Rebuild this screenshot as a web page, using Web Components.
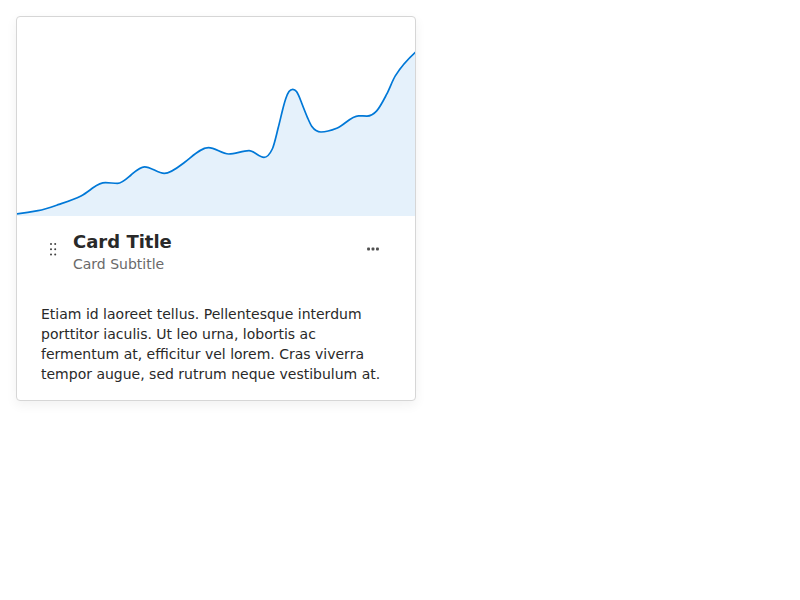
<!DOCTYPE html>
<html lang="en">
<head>
<meta charset="utf-8">
<title>Card</title>
<style>
  body { margin: 0; padding: 16px; background: #fff; color: #292929; font: 14px/20px "DejaVu Sans", sans-serif; }
</style>
</head>
<body>
<media-card>
  <area-chart slot="media" label="Growth trend"></area-chart>
  <card-header slot="header">
    <drag-handle slot="start"></drag-handle>
    <span slot="title">Card Title</span>
    <span slot="subtitle">Card Subtitle</span>
    <menu-button slot="end" label="More options"></menu-button>
  </card-header>
  Etiam id laoreet tellus. Pellentesque interdum porttitor iaculis. Ut leo urna, lobortis ac fermentum at, efficitur vel lorem. Cras viverra tempor augue, sed rutrum neque vestibulum at.
</media-card>

<template id="media-card">
  <style>
    :host { display: block; box-sizing: border-box; width: 100%; max-width: 400px; border: 1px solid #d6d6d6; border-radius: 4px; background: #fff; box-shadow: 0 4px 12px rgba(0, 0, 0, .06); }
    .media { overflow: hidden; border-radius: 3px 3px 0 0; }
    .body { padding: 30px 24px 16px; }
  </style>
  <div class="media"><slot name="media"></slot></div>
  <slot name="header"></slot>
  <div class="body"><slot></slot></div>
</template>

<template id="card-header">
  <style>
    :host { display: flex; align-items: center; gap: 8px; padding: 14px 24px 0; }
    .text { flex: 1; min-width: 0; }
    h2 { margin: 0; font-size: 18px; line-height: 24px; font-weight: 700; }
    p { margin: 0; color: #6a6a6a; }
    .tool { padding-bottom: 6px; }
  </style>
  <div class="tool"><slot name="start"></slot></div>
  <div class="text">
    <h2><slot name="title"></slot></h2>
    <p><slot name="subtitle"></slot></p>
  </div>
  <div class="tool"><slot name="end"></slot></div>
</template>

<template id="drag-handle">
  <style>
    :host { display: flex; color: #404040; cursor: grab; }
    svg { display: block; }
  </style>
  <svg width="24" height="24" viewBox="0 0 24 24" fill="currentColor" aria-hidden="true">
    <circle cx="10" cy="7" r="1"/><circle cx="14.2" cy="7" r="1"/>
    <circle cx="10" cy="12.2" r="1"/><circle cx="14.2" cy="12.2" r="1"/>
    <circle cx="10" cy="17.4" r="1"/><circle cx="14.2" cy="17.4" r="1"/>
  </svg>
</template>

<template id="menu-button">
  <style>
    :host { display: flex; }
    button { display: grid; place-items: center; width: 36px; height: 32px; padding: 0; border: 0; border-radius: 4px; background: none; color: #505050; cursor: pointer; }
    button:hover { background: #f2f2f2; }
  </style>
  <button type="button">
    <svg width="16" height="16" viewBox="0 0 16 16" fill="currentColor" aria-hidden="true">
      <rect x="2.1" y="6.6" width="2.9" height="2.8" rx=".9"/><rect x="6.55" y="6.6" width="2.9" height="2.8" rx=".9"/><rect x="11" y="6.6" width="2.9" height="2.8" rx=".9"/>
    </svg>
  </button>
</template>

<template id="area-chart">
  <style>
    :host { display: block; }
    svg { display: block; width: 100%; height: auto; }
    .area { fill: #e5f1fb; }
    .line { fill: none; stroke: #0078d7; stroke-width: 1.7; }
  </style>
  <svg viewBox="0 0 398 199" role="img"><path class="area"/><path class="line"/></svg>
</template>

<script>
  class TemplateElement extends HTMLElement {
    constructor() {
      super();
      this.attachShadow({ mode: "open" }).append(document.getElementById(this.localName).content.cloneNode(true));
    }
  }

  // Curve knots: x, y and the slope of the line there.
  const KNOTS = [
    [0, 196.8, -.1], [21, 193.7, -.2], [42, 187.4, -.34], [64, 178.9, -.5], [76, 170.8, -.72], [88.5, 165.6, 0], [100.5, 166.4, 0], [114, 158, -.85],
    [127.5, 149.8, 0], [147.3, 156.4, 0], [168, 145, -.75], [191.5, 130.7, 0], [211.7, 137, 0],
    [232, 133.7, 0], [247, 140.4, 0], [255.3, 132, -2.1], [261.2, 110.8, -3.9], [265.5, 93.3, -4], [268.9, 81.3, -2.9], [272, 74.5, -1.4], [275.8, 72.3, 0],
    [279.5, 74.6, 1.4], [283.9, 84, 2.6], [290.5, 100.6, 2.3], [294.9, 109.6, 1.4], [304, 115, 0], [319.7, 111.3, -.4], [341.5, 98.8, 0],
    [350, 99.1, 0], [359.7, 93.9, -1.1], [369.7, 77.2, -1.9], [378.3, 58.9, -1.6], [399, 34.8, -.9]
  ];

  class AreaChart extends TemplateElement {
    connectedCallback() {
      let d = `M${KNOTS[0][0]} ${KNOTS[0][1]}`;
      for (let i = 1; i < KNOTS.length; i++) {
        const [x0, y0, m0] = KNOTS[i - 1], [x1, y1, m1] = KNOTS[i], t = (x1 - x0) / 3;
        d += `C${x0 + t} ${y0 + m0 * t} ${x1 - t} ${y1 - m1 * t} ${x1} ${y1}`;
      }
      this.shadowRoot.querySelector("svg").setAttribute("aria-label", this.getAttribute("label") || "");
      this.shadowRoot.querySelector(".line").setAttribute("d", d);
      this.shadowRoot.querySelector(".area").setAttribute("d", d + "V199H0Z");
    }
  }

  class MenuButton extends TemplateElement {
    connectedCallback() {
      this.shadowRoot.querySelector("button").setAttribute("aria-label", this.getAttribute("label") || "");
    }
  }

  customElements.define("media-card", class extends TemplateElement {});
  customElements.define("card-header", class extends TemplateElement {});
  customElements.define("drag-handle", class extends TemplateElement {});
  customElements.define("menu-button", MenuButton);
  customElements.define("area-chart", AreaChart);
</script>
</body>
</html>
